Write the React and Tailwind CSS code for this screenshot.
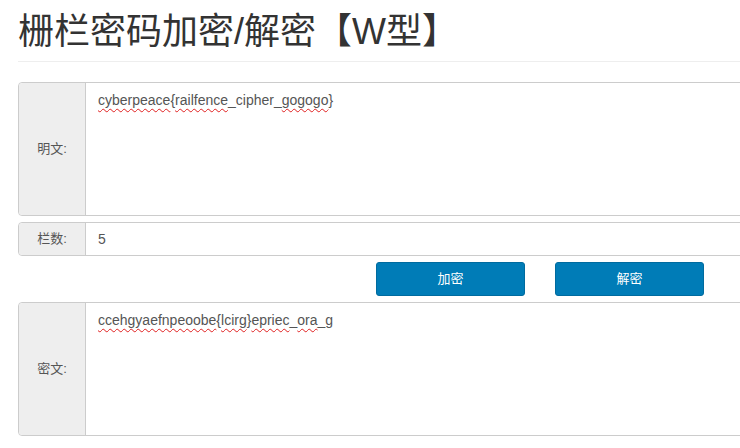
import React from 'react';

const font = { fontFamily: '"Liberation Sans", Arial, "Noto Sans CJK SC", sans-serif' };

const Squiggle = ({ children }) => (
  <span className="underline decoration-wavy decoration-[#e02020] decoration-1 underline-offset-[3px]">
    {children}
  </span>
);

const Panel = ({ label, children }) => (
  <div className="flex h-[134px] w-[760px] rounded-l-[4px] border border-[#ccc]">
    <div className="flex w-[67px] shrink-0 items-center justify-center rounded-l-[4px] border-r border-[#ccc] bg-[#eee] text-[13px] text-[#555]">
      {label}
    </div>
    <div className="flex-1 bg-white px-3 pt-[7px] text-[14px] leading-5 text-[#555]">{children}</div>
  </div>
);

export default function App() {
  return (
    <div className="h-[448px] w-[740px] overflow-hidden bg-white pl-[18px]" style={font}>
      <h1 className="mt-[12px] pb-[9px] text-[36px] leading-[40px] text-[#333] border-b border-[#eee] w-[760px]">
        栅栏密码加密/解密【W型】
      </h1>

      <div className="mt-[20px] flex flex-col gap-[6px]">
        <Panel label="明文:">
          <Squiggle>cyberpeace</Squiggle>{'{'}
          <Squiggle>railfence</Squiggle>_cipher_<Squiggle>gogogo</Squiggle>{'}'}
        </Panel>

        <div className="flex h-[34px] w-[760px] rounded-l-[4px] border border-[#ccc]">
          <div className="flex w-[67px] shrink-0 items-center justify-center rounded-l-[4px] border-r border-[#ccc] bg-[#eee] text-[13px] text-[#555]">
            栏数:
          </div>
          <div className="flex flex-1 items-center px-3 text-[14px] text-[#555]">5</div>
        </div>

        <div className="flex h-[34px] gap-[30px] pl-[358px]">
          <button className="h-[34px] w-[149px] rounded-[3px] border border-[#006b9f] bg-[#007cb7] text-[13px] text-white">
            加密
          </button>
          <button className="h-[34px] w-[149px] rounded-[3px] border border-[#006b9f] bg-[#007cb7] text-[13px] text-white">
            解密
          </button>
        </div>

        <Panel label="密文:">
          <Squiggle>ccehgyaefnpeoobe</Squiggle>{'{'}
          <Squiggle>lcirg</Squiggle>{'}'}
          <Squiggle>epriec</Squiggle>_<Squiggle>ora</Squiggle>_g
        </Panel>
      </div>
    </div>
  );
}
